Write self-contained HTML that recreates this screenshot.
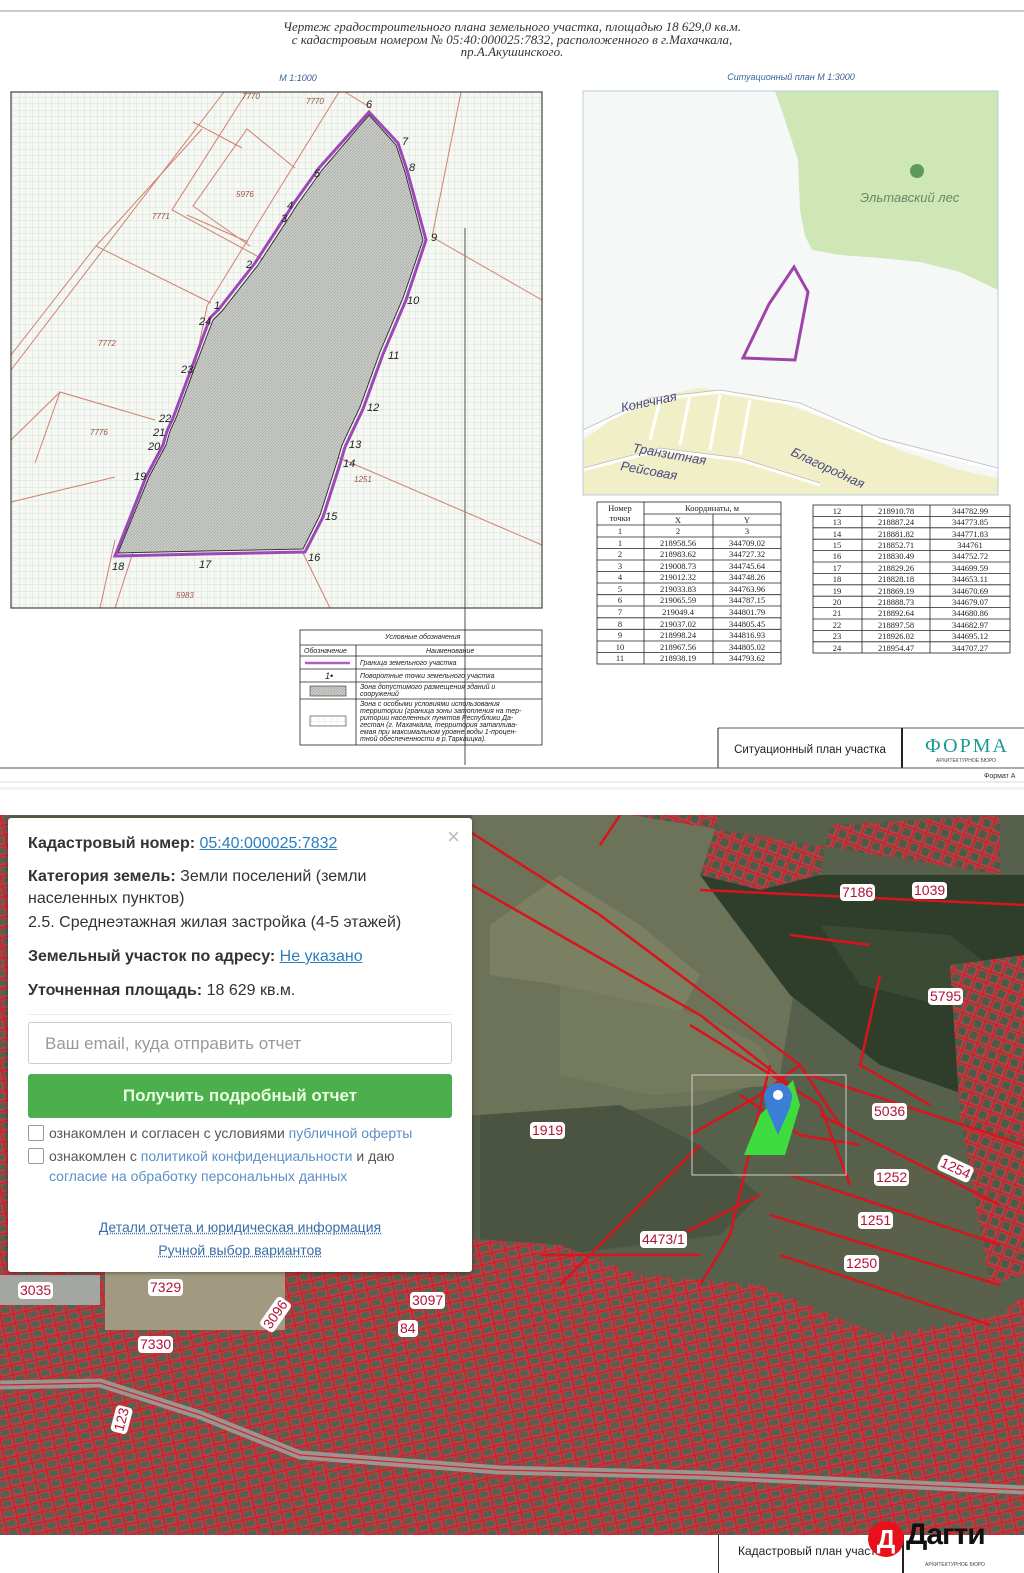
<!DOCTYPE html>
<html><head><meta charset="utf-8">
<style>
html,body{margin:0;padding:0;}
body{width:1024px;height:1573px;position:relative;overflow:hidden;background:#fff;font-family:"Liberation Sans",sans-serif;}
.abs{position:absolute;}
#popup{position:absolute;left:8px;top:818px;width:464px;height:454px;background:#fff;border-radius:3px;box-shadow:0 1px 4px rgba(0,0,0,.4);font-family:"Liberation Sans",sans-serif;color:#333;font-size:16px;}
#popup p{margin:0;position:absolute;left:20px;line-height:22px;}
#popup b{color:#333;}
#popup a{color:#2a7fbf;text-decoration:underline;}
.cb{position:absolute;left:20px;width:14px;height:14px;border:1px solid #999;border-radius:2px;background:#fff;}
.lbl{position:absolute;background:#fff;border-radius:4px;color:#b0143a;font-size:14px;padding:0 2px;line-height:17px;font-family:"Liberation Sans",sans-serif;}
</style></head><body>

<svg class="abs" style="left:0;top:0" width="1024" height="790" xmlns="http://www.w3.org/2000/svg">
<defs>
<pattern id="grid" width="6.5" height="6.5" patternUnits="userSpaceOnUse"><path d="M6.5 0V6.5H0" fill="none" stroke="#cfd8cf" stroke-width="0.7"/></pattern>
<pattern id="hatch" width="3" height="3" patternUnits="userSpaceOnUse"><rect width="3" height="3" fill="#cbcdc9"/><path d="M0 3L3 0" stroke="#9a9c98" stroke-width="0.6"/></pattern>
</defs>
<line x1="0" y1="11" x2="1024" y2="11" stroke="#999" stroke-width="1"/>
<g font-family="Liberation Serif" font-style="italic" font-size="13" fill="#333" text-anchor="middle">
<text x="512" y="31">Чертеж градостроительного плана земельного участка,    площадью 18 629,0 кв.м.</text>
<text x="512" y="44">с кадастровым номером    № 05:40:000025:7832, расположенного в г.Махачкала,</text>
<text x="512" y="56">пр.А.Акушинского.</text>
</g>
<text x="298" y="81" font-family="Liberation Sans" font-style="italic" font-size="9" fill="#3a5fa0" text-anchor="middle">М 1:1000</text>
<text x="791" y="80" font-family="Liberation Sans" font-style="italic" font-size="9" fill="#3a5fa0" text-anchor="middle">Ситуационный план М 1:3000</text>

<rect x="11" y="92" width="531" height="516" fill="#f6f8f3"/>
<rect x="11" y="92" width="531" height="516" fill="url(#grid)"/>
<g stroke="#d08070" stroke-width="1" fill="none">
<path d="M11 370L224 92"/><path d="M193 122L242 148"/><path d="M247 92L172 210L340 301"/>
<path d="M202 129L96 246L211 303"/><path d="M96 246L11 355"/>
<path d="M187 215L248 242"/><path d="M295 168L247 129L193 206L250 246"/>
<path d="M339 92L207 306L195 365L150 500L115 608"/><path d="M432 237L461 92"/>
<path d="M432 237L542 300"/><path d="M11 502L115 477"/><path d="M11 440L60 392L155 420"/>
<path d="M60 392L35 463"/><path d="M335 456L542 545"/><path d="M303 553L330 608"/>
<path d="M100 608L115 540"/><path d="M345 92L371 108"/>
</g>
<g font-family="Liberation Sans" font-style="italic" font-size="8" fill="#a05040">
<text x="242" y="99">7770</text><text x="306" y="104">7770</text><text x="236" y="197">5976</text>
<text x="152" y="219">7771</text><text x="98" y="346">7772</text><text x="90" y="435">7776</text>
<text x="354" y="482">1251</text><text x="176" y="598">5983</text>
</g>
<polygon points="369,115 396,145 405,172 423,240 403,298 380,352 360,407 342,445 337,462 320,515 303,549 204,551 118,553 149,477 166,445 170,431 176,418 195,367 213,320 222,311 258,265 290,216 297,205 322,170" fill="url(#hatch)" stroke="#333" stroke-width="1"/>
<polygon points="369,112 398,143 407,170 426,240 406,300 383,354 363,409 345,447 340,464 323,517 305,552 204,554 115,556 146,477 163,445 167,431 173,418 192,367 210,318 219,309 255,263 287,214 294,203 319,168" fill="none" stroke="#9c48b8" stroke-width="3"/>
<line x1="465" y1="228" x2="465" y2="765" stroke="#888" stroke-width="1.5"/>
<g font-family="Liberation Sans" font-style="italic" font-size="11" fill="#222">
<text x="366" y="108">6</text><text x="402" y="145">7</text><text x="409" y="171">8</text><text x="431" y="241">9</text>
<text x="407" y="304">10</text><text x="388" y="359">11</text><text x="367" y="411">12</text><text x="349" y="448">13</text>
<text x="343" y="467">14</text><text x="325" y="520">15</text><text x="308" y="561">16</text><text x="199" y="568">17</text>
<text x="112" y="570">18</text><text x="134" y="480">19</text><text x="148" y="450">20</text><text x="153" y="436">21</text>
<text x="159" y="422">22</text><text x="181" y="373">23</text><text x="199" y="325">24</text><text x="214" y="309">1</text>
<text x="246" y="268">2</text><text x="281" y="222">3</text><text x="287" y="209">4</text><text x="314" y="177">5</text>
</g>
<rect x="11" y="92" width="531" height="516" fill="none" stroke="#444" stroke-width="1.2"/>

<rect x="583" y="91" width="415" height="404" fill="#f6f8f8"/>
<path d="M775 91H998V290L960 272 920 262 880 258 840 255 812 250 805 236 800 210 798 160 785 120Z" fill="#cfe6b6"/>
<path d="M583 440L640 400 700 388 760 395 830 420 900 450 960 470 998 478V495H583Z" fill="#f1efc8"/>
<g stroke="#fff" stroke-width="3" fill="none"><path d="M583 432L650 400 720 392 800 405 880 440 998 470"/><path d="M583 470L660 450 740 460 820 485"/><path d="M660 400L650 440M690 395L680 445M720 395L710 450M750 400L740 455"/></g>
<g stroke="#bbb" stroke-width="0.8" fill="none"><path d="M583 430L650 398 720 390 800 403 880 438 998 468"/><path d="M583 468L660 448 740 458 820 483"/></g>
<polygon points="794,267 808,292 795,360 743,358 769,304" fill="none" stroke="#a043a8" stroke-width="3"/>
<circle cx="917" cy="171" r="7" fill="#5a9a5a"/>
<text x="860" y="202" font-family="Liberation Sans" font-style="italic" font-size="13" fill="#6a8a6a">Эльтавский лес</text>
<g font-family="Liberation Sans" font-size="13" fill="#4a4a80" font-style="italic">
<text x="622" y="412" transform="rotate(-12 622 412)">Конечная</text>
<text x="632" y="452" transform="rotate(10 632 452)">Транзитная</text>
<text x="620" y="470" transform="rotate(10 620 470)">Рейсовая</text>
<text x="790" y="455" transform="rotate(25 790 455)">Благородная</text>
</g>
<rect x="583" y="91" width="415" height="404" fill="none" stroke="#bcd" stroke-width="1"/>

<g fill="none" stroke="#222" stroke-width="0.8">
<rect x="597" y="502" width="184" height="162"/>
<line x1="644" y1="502" x2="644" y2="664"/><line x1="713" y1="514" x2="713" y2="664"/>
<line x1="644" y1="514" x2="781" y2="514"/><line x1="597" y1="525" x2="781" y2="525"/>
<line x1="597" y1="537" x2="781" y2="537"/>
<line x1="597" y1="548.5" x2="781" y2="548.5"/><line x1="597" y1="560" x2="781" y2="560"/><line x1="597" y1="571.6" x2="781" y2="571.6"/><line x1="597" y1="583" x2="781" y2="583"/><line x1="597" y1="594.7" x2="781" y2="594.7"/><line x1="597" y1="606" x2="781" y2="606"/><line x1="597" y1="617.8" x2="781" y2="617.8"/><line x1="597" y1="629.3" x2="781" y2="629.3"/><line x1="597" y1="641" x2="781" y2="641"/><line x1="597" y1="652.4" x2="781" y2="652.4"/>
</g>
<g font-family="Liberation Serif" font-size="8.5" fill="#222" text-anchor="middle">
<text x="620" y="511">Номер</text><text x="620" y="521">точки</text><text x="712" y="511">Координаты, м</text>
<text x="678" y="523">X</text><text x="747" y="523">Y</text>
<text x="620" y="534">1</text><text x="678" y="534">2</text><text x="747" y="534">3</text>
<text x="620" y="546">1</text><text x="678" y="546">218958.56</text><text x="747" y="546">344709.02</text>
<text x="620" y="557">2</text><text x="678" y="557">218983.62</text><text x="747" y="557">344727.32</text>
<text x="620" y="569">3</text><text x="678" y="569">219008.73</text><text x="747" y="569">344745.64</text>
<text x="620" y="580">4</text><text x="678" y="580">219012.32</text><text x="747" y="580">344748.26</text>
<text x="620" y="592">5</text><text x="678" y="592">219033.83</text><text x="747" y="592">344763.96</text>
<text x="620" y="603">6</text><text x="678" y="603">219065.59</text><text x="747" y="603">344787.15</text>
<text x="620" y="615">7</text><text x="678" y="615">219049.4</text><text x="747" y="615">344801.79</text>
<text x="620" y="627">8</text><text x="678" y="627">219037.02</text><text x="747" y="627">344805.45</text>
<text x="620" y="638">9</text><text x="678" y="638">218998.24</text><text x="747" y="638">344816.93</text>
<text x="620" y="650">10</text><text x="678" y="650">218967.56</text><text x="747" y="650">344805.02</text>
<text x="620" y="661">11</text><text x="678" y="661">218938.19</text><text x="747" y="661">344793.62</text>
</g>
<g fill="none" stroke="#222" stroke-width="0.8">
<rect x="813" y="505" width="197" height="148"/>
<line x1="862" y1="505" x2="862" y2="653"/><line x1="930" y1="505" x2="930" y2="653"/>
<line x1="813" y1="516.4" x2="1010" y2="516.4"/><line x1="813" y1="527.8" x2="1010" y2="527.8"/><line x1="813" y1="539.2" x2="1010" y2="539.2"/><line x1="813" y1="550.6" x2="1010" y2="550.6"/><line x1="813" y1="562" x2="1010" y2="562"/><line x1="813" y1="573.4" x2="1010" y2="573.4"/><line x1="813" y1="584.8" x2="1010" y2="584.8"/><line x1="813" y1="596.2" x2="1010" y2="596.2"/><line x1="813" y1="607.6" x2="1010" y2="607.6"/><line x1="813" y1="619" x2="1010" y2="619"/><line x1="813" y1="630.4" x2="1010" y2="630.4"/><line x1="813" y1="641.8" x2="1010" y2="641.8"/>
</g>
<g font-family="Liberation Serif" font-size="8.5" fill="#222" text-anchor="middle">
<text x="837" y="514">12</text><text x="896" y="514">218910.78</text><text x="970" y="514">344782.99</text>
<text x="837" y="525">13</text><text x="896" y="525">218887.24</text><text x="970" y="525">344773.85</text>
<text x="837" y="537">14</text><text x="896" y="537">218881.82</text><text x="970" y="537">344771.83</text>
<text x="837" y="548">15</text><text x="896" y="548">218852.71</text><text x="970" y="548">344761</text>
<text x="837" y="559">16</text><text x="896" y="559">218830.49</text><text x="970" y="559">344752.72</text>
<text x="837" y="571">17</text><text x="896" y="571">218829.26</text><text x="970" y="571">344699.59</text>
<text x="837" y="582">18</text><text x="896" y="582">218828.18</text><text x="970" y="582">344653.11</text>
<text x="837" y="594">19</text><text x="896" y="594">218869.19</text><text x="970" y="594">344670.69</text>
<text x="837" y="605">20</text><text x="896" y="605">218888.73</text><text x="970" y="605">344679.07</text>
<text x="837" y="616">21</text><text x="896" y="616">218892.64</text><text x="970" y="616">344680.86</text>
<text x="837" y="628">22</text><text x="896" y="628">218897.58</text><text x="970" y="628">344682.97</text>
<text x="837" y="639">23</text><text x="896" y="639">218926.02</text><text x="970" y="639">344695.12</text>
<text x="837" y="651">24</text><text x="896" y="651">218954.47</text><text x="970" y="651">344707.27</text>
</g>

<g fill="none" stroke="#222" stroke-width="0.8">
<rect x="300" y="630" width="242" height="115"/>
<line x1="300" y1="645" x2="542" y2="645"/><line x1="300" y1="656" x2="542" y2="656"/>
<line x1="300" y1="669" x2="542" y2="669"/><line x1="300" y1="682" x2="542" y2="682"/><line x1="300" y1="699" x2="542" y2="699"/>
<line x1="356" y1="645" x2="356" y2="745"/>
</g>
<line x1="305" y1="663" x2="350" y2="663" stroke="#b060c0" stroke-width="2.5"/>
<rect x="310" y="686" width="36" height="10" fill="url(#hatch)" stroke="#333" stroke-width="0.6"/>
<rect x="310" y="716" width="36" height="10" fill="url(#grid)" stroke="#333" stroke-width="0.6"/>
<g font-family="Liberation Sans" font-style="italic" font-size="7" fill="#222">
<text x="385" y="639">Условные обозначения</text>
<text x="304" y="653">Обозначение</text><text x="426" y="653">Наименование</text>
<text x="360" y="665">Граница земельного участка</text>
<text x="325" y="679" font-size="9">1•</text><text x="360" y="678">Поворотные точки земельного участка</text>
<text x="360" y="689">Зона допустимого размещения зданий и</text><text x="360" y="696">сооружений</text>
<text x="360" y="706">Зона с особыми условиями использования</text>
<text x="360" y="713">территории (граница зоны затопления на тер-</text>
<text x="360" y="720">ритории населенных пунктов Республики Да-</text>
<text x="360" y="727">гестан (г. Махачкала, территория затаплива-</text>
<text x="360" y="734">емая при максимальном уровне воды 1-процен-</text>
<text x="360" y="741">тной обеспеченности в р.Таркаицка).</text>
</g>

<g fill="none" stroke="#222" stroke-width="1">
<line x1="718" y1="728" x2="1024" y2="728" stroke-width="0.8"/>
<line x1="718" y1="728" x2="718" y2="768"/><line x1="902" y1="728" x2="902" y2="768" stroke-width="2"/>
</g>
<text x="810" y="753" font-family="Liberation Sans" font-size="11.5" fill="#222" text-anchor="middle">Ситуационный план участка</text>
<text x="966" y="752" font-family="Liberation Serif" font-size="20" fill="#1a9a95" text-anchor="middle" textLength="82">ФОРМА</text>
<text x="966" y="762" font-family="Liberation Sans" font-size="5" fill="#444" text-anchor="middle">АРХИТЕКТУРНОЕ БЮРО</text>
<line x1="0" y1="768" x2="1024" y2="768" stroke="#555" stroke-width="1"/>
<text x="984" y="778" font-family="Liberation Sans" font-size="7" fill="#333">Формат А</text>
<line x1="0" y1="782" x2="1024" y2="782" stroke="#ccc" stroke-width="0.8"/>
<rect x="0" y="787" width="1024" height="13" fill="#f4f4f4"/>
</svg>

<svg class="abs" style="left:0;top:815px" width="1024" height="720" xmlns="http://www.w3.org/2000/svg">
<defs>
<pattern id="dense" width="13" height="10" patternUnits="userSpaceOnUse" patternTransform="rotate(-12)">
<rect width="13" height="10" fill="#a0484a"/><rect x="2.5" y="2.5" width="8" height="5" fill="#56604e"/>
<path d="M0 0H13M0 0V10" stroke="#e4121c" stroke-width="2"/></pattern>
<pattern id="dense2" width="12" height="12" patternUnits="userSpaceOnUse" patternTransform="rotate(20)">
<rect width="12" height="12" fill="#9c4a4a"/><rect x="2.5" y="2.5" width="7" height="7" fill="#4c5a46"/>
<path d="M0 0H12M0 0V12" stroke="#e4121c" stroke-width="2"/></pattern>
</defs>
<rect width="1024" height="720" fill="#56604a"/>
<path d="M472 0H700L790 75 800 140 780 260 700 290 560 300 472 300Z" fill="#6c7359"/>
<path d="M490 110L560 60 640 110 700 160 680 200 560 170 490 160Z" fill="#7b8063"/>
<path d="M560 170L700 200 760 230 780 270 650 280 560 260Z" fill="#747a5c"/>
<path d="M700 60H1024V300L880 250 790 180Z" fill="#2f3e2a"/>
<path d="M820 110L950 120 1000 160 940 190 860 170Z" fill="#3a4a33"/>
<path d="M480 300L620 290 700 330 760 380 720 420 560 440 480 430Z" fill="#4a5440"/>
<path d="M760 370L1000 330V520L780 480Z" fill="#5a6049"/>
<path d="M0 440L160 450 300 430 420 420 560 430 640 460 760 470 880 520 1000 500 1024 480V720H0Z" fill="url(#dense)"/>
<path d="M630 0H720L700 60 760 75 820 60 830 10 1000 0V40 960 60 900 70 800 80 700 80 640 60Z" fill="url(#dense2)"/>
<path d="M950 150L1024 140V460L990 470 960 300Z" fill="url(#dense2)"/>
<path d="M0 0H8V455H0Z" fill="url(#dense)"/>
<rect x="0" y="460" width="100" height="30" fill="#a4a6a2"/>
<rect x="105" y="455" width="180" height="60" fill="#a29a80"/>
<path d="M0 570L100 568 200 600 300 640 500 655 700 660 1024 675" stroke="#9a9590" stroke-width="9" fill="none"/>
<path d="M0 570L100 568 200 600 300 640 500 655 700 660 1024 675" stroke="#d4202a" stroke-width="1.2" fill="none"/>
<g stroke="#d8141e" stroke-width="2.5" fill="none">
<path d="M472 18L600 100 800 250 840 310"/><path d="M472 70L700 200 790 270"/>
<path d="M700 75L1024 90"/><path d="M790 120L870 130"/>
<path d="M690 210L820 290"/><path d="M810 260L1024 330"/><path d="M820 300L1000 390"/>
<path d="M790 360L1000 430"/><path d="M770 400L1000 470"/><path d="M780 440L990 510"/>
<path d="M700 330L590 440 560 470"/><path d="M690 320L760 280 800 250"/>
<path d="M770 250L730 420 700 470"/><path d="M660 430L760 380"/>
<path d="M540 440L700 440"/><path d="M820 290L850 370"/>
<path d="M740 280L800 320 860 330"/><path d="M880 160L860 250 930 290"/>
<path d="M620 0L600 30"/>
</g>
<rect x="692" y="260" width="154" height="100" fill="none" stroke="#cfcfcf" stroke-width="1"/>
<path d="M793 265L800 290 785 340 744 340 760 300Z" fill="#3fdc3f"/>
<path d="M765 290L778 320 791 290Z" fill="#3a7fd5"/>
<circle cx="778" cy="282" r="14" fill="#3a7fd5"/>
<circle cx="778" cy="280" r="5" fill="#fff"/>
</svg>

<div class="lbl" style="left:840px;top:884px">7186</div>
<div class="lbl" style="left:912px;top:882px">1039</div>
<div class="lbl" style="left:928px;top:988px">5795</div>
<div class="lbl" style="left:872px;top:1103px">5036</div>
<div class="lbl" style="left:530px;top:1122px">1919</div>
<div class="lbl" style="left:874px;top:1169px">1252</div>
<div class="lbl" style="left:938px;top:1160px;transform:rotate(25deg)">1254</div>
<div class="lbl" style="left:858px;top:1212px">1251</div>
<div class="lbl" style="left:844px;top:1255px">1250</div>
<div class="lbl" style="left:640px;top:1231px">4473/1</div>
<div class="lbl" style="left:18px;top:1282px">3035</div>
<div class="lbl" style="left:148px;top:1279px">7329</div>
<div class="lbl" style="left:138px;top:1336px">7330</div>
<div class="lbl" style="left:410px;top:1292px">3097</div>
<div class="lbl" style="left:398px;top:1320px">84</div>
<div class="lbl" style="left:258px;top:1306px;transform:rotate(-55deg)">3096</div>
<div class="lbl" style="left:108px;top:1411px;transform:rotate(-75deg)">123</div>

<div id="popup">
<div style="position:absolute;right:12px;top:6px;font-size:22px;color:#bbb;">×</div>
<p style="top:15px"><b>Кадастровый номер:</b> <a>05:40:000025:7832</a></p>
<p style="top:48px;width:370px"><b>Категория земель:</b> Земли поселений (земли населенных пунктов)</p>
<p style="top:94px">2.5. Среднеэтажная жилая застройка (4-5 этажей)</p>
<p style="top:128px"><b>Земельный участок по адресу:</b> <a>Не указано</a></p>
<p style="top:162px"><b>Уточненная площадь:</b> 18 629 кв.м.</p>
<div style="position:absolute;left:20px;top:196px;width:424px;height:1px;background:#eee"></div>
<div style="position:absolute;left:20px;top:204px;height:42px;border:1px solid #ccc;border-radius:3px;color:#999;font-size:17px;line-height:42px;padding-left:16px;box-sizing:border-box;width:424px;">Ваш email, куда отправить отчет</div>
<div style="position:absolute;left:20px;top:256px;width:424px;height:44px;background:#4cae4c;border-radius:3px;color:#e8ffe0;font-size:17px;font-weight:bold;text-align:center;line-height:44px;">Получить подробный отчет</div>
<div class="cb" style="top:307px"></div>
<p style="top:304px;left:41px;font-size:14px;color:#555">ознакомлен и согласен с условиями <span style="color:#5a8fc8">публичной оферты</span></p>
<div class="cb" style="top:330px"></div>
<p style="top:327px;left:41px;font-size:14px;color:#555">ознакомлен с <span style="color:#5a8fc8">политикой конфиденциальности</span> и даю</p>
<p style="top:347px;left:41px;font-size:14px;color:#5a8fc8">согласие на обработку персональных данных</p>
<p style="top:398px;left:0;width:464px;text-align:center;font-size:14px;"><a style="color:#3a6ea8;text-decoration:underline dotted">Детали отчета и юридическая информация</a></p>
<p style="top:421px;left:0;width:464px;text-align:center;font-size:14px;"><a style="color:#3a6ea8;text-decoration:underline dotted">Ручной выбор вариантов</a></p>
</div>

<div class="abs" style="left:718px;top:1535px;width:1px;height:38px;background:#333"></div>
<div class="abs" style="left:902px;top:1535px;width:2px;height:38px;background:#222"></div>
<div class="abs" style="left:738px;top:1544px;font-size:12px;color:#222">Кадастровый план участка</div>
<div class="abs" style="left:925px;top:1562px;font-size:5px;color:#444">АРХИТЕКТУРНОЕ БЮРО</div>
<div class="abs" style="left:868px;top:1521px;width:36px;height:36px;border-radius:50%;background:#e8101a;color:#fff;font-weight:bold;font-size:26px;line-height:36px;text-align:center;">Д</div>
<div class="abs" style="left:906px;top:1518px;font-size:30px;line-height:34px;font-weight:bold;color:#111;letter-spacing:-1px">Дагти</div>
</body></html>
